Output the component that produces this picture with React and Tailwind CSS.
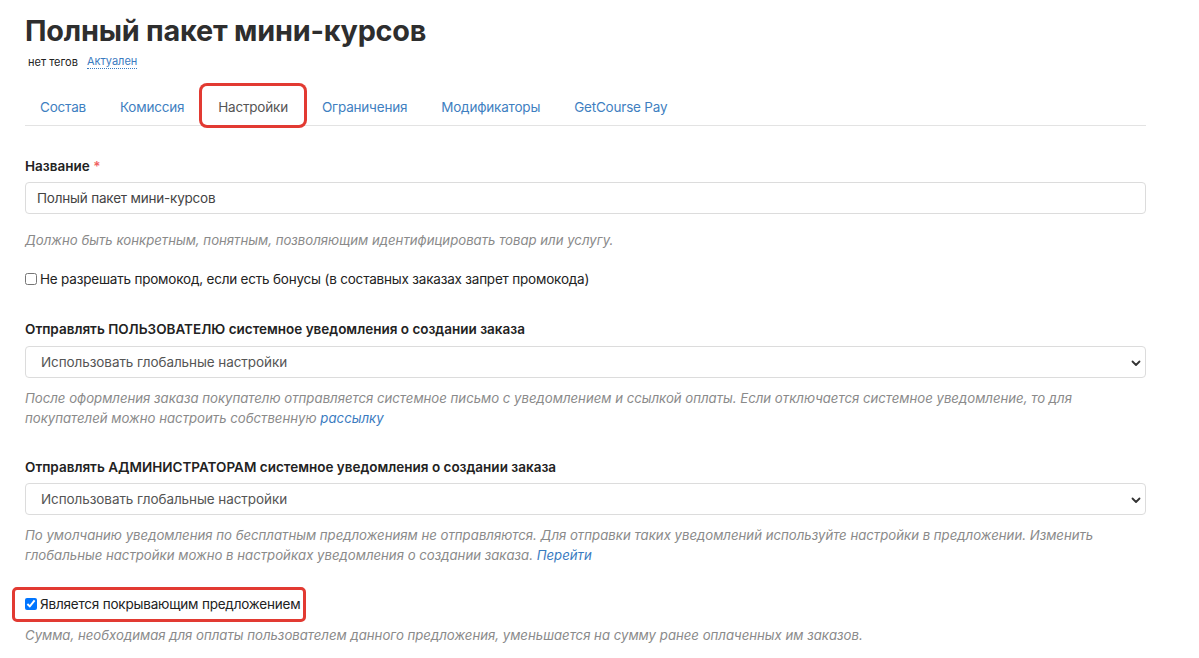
import React from "react";

function Chevron() {
  return (
    <svg width="10" height="7" viewBox="0 0 10 7" className="absolute right-[4px] top-[13px]">
      <path d="M1.5 1.5 L5 5 L8.5 1.5" fill="none" stroke="#333" strokeWidth="1.8" strokeLinecap="round" strokeLinejoin="round" />
    </svg>
  );
}

function SelectBox() {
  return (
    <div className="relative h-[32px] rounded-[4px] border border-[#dcdcdc] bg-white">
      <div className="pl-[15px] text-[13.5px] leading-[30px] tracking-[-0.08px] text-[#555]">Использовать глобальные настройки</div>
      <Chevron />
    </div>
  );
}

export default function App() {
  const tabs = ["Состав", "Комиссия", "Настройки", "Ограничения", "Модификаторы", "GetCourse Pay"];
  return (
    <div className="min-h-[658px] bg-white" style={{ fontFamily: "Inter, 'Noto Sans', sans-serif" }}>
      <div className="w-[1146px] pl-[25px]">
        <div className="pt-[14px] text-[28.8px] font-bold leading-[34px] tracking-[-0.2px] text-[#2e2e2e]">Полный пакет мини-курсов</div>
        <div className="mt-[6px] flex h-[16px] items-center pl-[3px] text-[11px] leading-[16px]">
          <span className="text-[#222]">нет тегов</span>
          <span className="ml-[9px] border-b border-dotted border-[#3a7bbf] leading-[13px] text-[#3a7bbf]">Актуален</span>
        </div>
        <div className="mt-[16px] flex border-b border-[#e3e3e3]">
          {tabs.map((t, i) => (
            <div
              key={t}
              className={
                i === 2
                  ? "relative mx-[1px] flex h-[39px] items-center rounded-[5px] px-[16px] pt-[3px] text-[13.5px] tracking-[-0.2px] text-[#555] ring-[3px] ring-[#e23a32]"
                  : i === 0
                  ? "mx-[1px] flex h-[39px] items-center pl-[14px] pr-[16px] pt-[3px] text-[13.5px] tracking-[-0.2px] text-[#3f7fc1]"
                  : "mx-[1px] flex h-[39px] items-center px-[16px] pt-[3px] text-[13.5px] tracking-[-0.2px] text-[#3f7fc1]"
              }
            >
              {t}
            </div>
          ))}
        </div>

        <div className="mt-[30px] h-[20px] text-[13.5px] font-semibold leading-[20px] text-[#222]">
          Название <span className="text-[#f06060]">*</span>
        </div>
        <div className="mt-[6px] h-[32px] rounded-[4px] border border-[#dcdcdc] bg-white pl-[11px] text-[13.5px] leading-[30px] tracking-[-0.2px] text-[#444]">
          Полный пакет мини-курсов
        </div>
        <div className="mt-[16px] text-[13.2px] italic leading-[20px] text-[#8a8a8a]">
          Должно быть конкретным, понятным, позволяющим идентифицировать товар или услугу.
        </div>
        <label className="mt-[19px] flex h-[20px] items-center text-[13.5px] tracking-[-0.2px] text-[#222]">
          <input type="checkbox" className="m-0 mr-[3px] h-[12px] w-[12px]" />
          Не разрешать промокод, если есть бонусы (в составных заказах запрет промокода)
        </label>

        <div className="mt-[30px] h-[20px] text-[13.5px] font-semibold leading-[20px] text-[#222]">
          Отправлять ПОЛЬЗОВАТЕЛЮ системное уведомления о создании заказа
        </div>
        <div className="mt-[7px]">
          <SelectBox />
        </div>
        <div className="mt-[10px] text-[13.2px] italic leading-[20px] text-[#8a8a8a]">
          После оформления заказа покупателю отправляется системное письмо с уведомлением и ссылкой оплаты. Если отключается системное уведомление, то для
          <br />
          покупателей можно настроить собственную <span className="text-[#3a7bbf]">рассылку</span>
        </div>

        <div className="mt-[29px] h-[20px] text-[13.5px] font-semibold leading-[20px] text-[#222]">
          Отправлять АДМИНИСТРАТОРАМ системное уведомления о создании заказа
        </div>
        <div className="mt-[6px]">
          <SelectBox />
        </div>
        <div className="mt-[10px] text-[13.2px] italic leading-[20px] text-[#8a8a8a]">
          По умолчанию уведомления по бесплатным предложениям не отправляются. Для отправки таких уведомлений используйте настройки в предложении. Изменить
          <br />
          глобальные настройки можно в настройках уведомления о создании заказа. <span className="text-[#3a7bbf]">Перейти</span>
        </div>

        <div className="relative mt-[29px] h-[20px]">
          <div className="absolute left-[-13px] top-[-7px] h-[35px] w-[294px] rounded-[5px] border-[3px] border-[#e23a32]" />
          <label className="flex h-[20px] items-center text-[13.5px] tracking-[-0.2px] text-[#222]">
            <input type="checkbox" defaultChecked className="m-0 mr-[3px] h-[12px] w-[12px]" />
            Является покрывающим предложением
          </label>
        </div>
        <div className="mt-[11px] text-[13.2px] italic leading-[20px] text-[#8a8a8a]">
          Сумма, необходимая для оплаты пользователем данного предложения, уменьшается на сумму ранее оплаченных им заказов.
        </div>
      </div>
    </div>
  );
}
